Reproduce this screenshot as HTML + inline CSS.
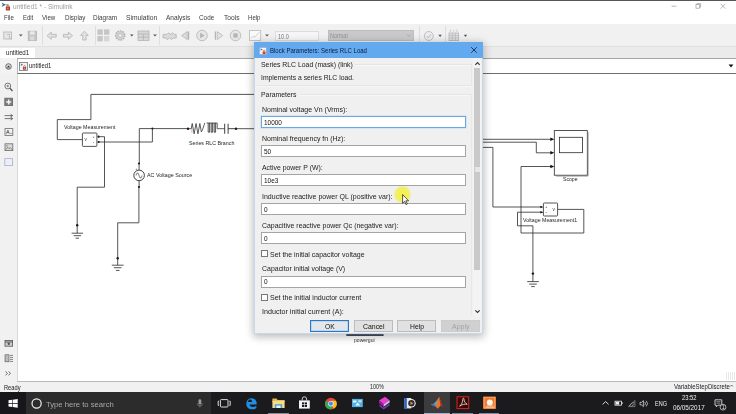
<!DOCTYPE html>
<html>
<head>
<meta charset="utf-8">
<title>untitled1 * - Simulink</title>
<style>
html,body{margin:0;padding:0;}
body{width:736px;height:414px;overflow:hidden;background:#fff;font-family:"Liberation Sans",sans-serif;position:relative;}
.a{position:absolute;}
.t{position:absolute;white-space:nowrap;line-height:1;color:#222;filter:blur(0.3px);}
/* window chrome */
#top{left:0;top:0;width:736px;height:1px;background:#555;}
#titlebar{left:0;top:1px;width:736px;height:11px;background:#fff;}
#menubar{left:0;top:12px;width:736px;height:12px;background:#fff;}
#toolbar{left:0;top:24px;width:736px;height:22px;background:#f1f1f1;}
#tabbar{left:0;top:46px;width:736px;height:12px;background:#ebebeb;border-top:1px solid #e0e0e0;box-sizing:border-box;}
#tab{left:0;top:48px;width:35px;height:10px;background:#fff;}
#crumbbar{left:0;top:58px;width:736px;height:16px;background:#f3f3f3;}
#crumb{left:17px;top:58px;width:720px;height:16px;background:#fff;border-top:1px solid #a6a6a6;border-left:1px solid #b5b5b5;border-bottom:1px solid #6e6e6e;box-sizing:border-box;}
#palette{left:0;top:74px;width:18px;height:307px;background:#f1f1f1;border-right:1px solid #d9d9d9;box-sizing:border-box;}
#canvas{left:17px;top:74px;width:719px;height:307px;background:#fff;}
#statusbar{left:0;top:381px;width:736px;height:12px;background:#f1f1f1;box-sizing:border-box;background-image:linear-gradient(#b9b9b9,#b9b9b9);background-size:719px 1px;background-position:17px 0;background-repeat:no-repeat;}
#taskbar{left:0;top:392px;width:736px;height:22px;background:#1b1b1d;}
/* dialog */
#dlgshadow{left:254px;top:42px;width:228.500px;height:292.200px;box-shadow:0 2px 8px 1px rgba(0,0,0,.27);}
#dlg{left:254px;top:42px;width:228.500px;height:292.200px;background:#f0f0f0;border:1.600px solid #c2d9f0;box-sizing:border-box;}
#dlgtitle{left:254px;top:42px;width:228.500px;height:16px;background:#62a9f0;}
.inp{position:absolute;left:261px;width:205px;height:12px;background:#fff;border:1px solid #a4a4a4;box-sizing:border-box;}
.btn{position:absolute;top:320.200px;height:11.800px;background:#e1e1e1;border:1px solid #bcbcbc;box-sizing:border-box;}
.cb{position:absolute;left:260.600px;width:7px;height:7px;background:#fdfdfd;border:0.900px solid #787878;box-sizing:border-box;}
.d{font-size:7.4px;color:#1a1a1a;}
</style>
</head>
<body>
<div class="a" id="titlebar"></div>
<div class="a" id="menubar"></div>
<div class="a" id="toolbar"></div>
<div class="a" id="tabbar"></div>
<div class="a" id="tab"></div>
<div class="a" id="crumbbar"></div>
<div class="a" id="crumb"></div>
<div class="a" id="canvas"></div>
<div class="a" id="palette"></div>
<div class="a" id="statusbar"></div>
<div class="a" id="taskbar"></div>
<div class="a" id="top"></div>

<!-- DIAGRAM -->
<svg class="a" id="diagram" style="left:0;top:0" width="736" height="414" viewBox="0 0 736 414">
<g fill="none" stroke="#2a2a2a" stroke-width="0.8" stroke-linejoin="miter">
<!-- left: top loop into VM block -->
<path d="M254 94.4H90.9V119.6H57.3V139.6H82.5"/>
<!-- VM block -->
<rect x="82.4" y="133" width="14.5" height="13.4" rx="0.8" fill="#fff"/>
<!-- upper port to ground1 -->
<path d="M98.5 136.7H104.5V187.2H77.2V225"/>
<!-- lower port to node -->
<path d="M98.5 142H152.4V128.6"/>
<!-- main horizontal -->
<path d="M139.3 128.6H188"/>
<path d="M236 128.7H254"/>
<!-- down to AC source -->
<path d="M139.3 128.6V163.5"/>
<path d="M139.100 163.500V170"/>
<circle cx="139.100" cy="175.400" r="5.300" fill="#fff" stroke-width="0.900"/>
<path d="M136 175.5c1-3.4 2-3.4 3 0s2 3.4 3 0" stroke-width="0.7"/>
<path d="M139.100 180.700V186.700"/>
<path d="M138.9 186.7V222.8H117.7V258"/>
<!-- ground1 -->
<path d="M77.2 225V233.2M71.6 233.2H83M73.6 235.7H81M75.6 238.2H79" />
<!-- ground2 -->
<path d="M117.7 258V265.2M111.8 265.2H123.6M113.9 267.7H121.5M115.9 270.4H119.5"/>
<!-- RLC branch -->
<path d="M188 128.700H191.300l0.950 -5.200 1.900 10.300 1.900-10.300 1.900 10.300 1.900-10.300 1.500 8.400 1.300-2.600 2.200-6.400" stroke-width="0.750"/>
<path d="M206.600 123H217.200V128.700H224.700" stroke-width="0.750"/>
<path d="M208.200 123V132.200H209.600V123M211.200 123V132.200H212.600V123M214.200 123V132.200H215.600V123" stroke-width="0.800"/>
<path d="M224.700 123.700V133.800M228.100 123.700V133.800M228.100 128.700H236" stroke-width="0.900"/>
<path d="M191.900 124.500v8.500" stroke="#c0392b" stroke-width="0.700" opacity="0.550"/>
</g>
<g fill="#1a1a1a" stroke="none">
<circle cx="98.6" cy="136.7" r="1.1"/><circle cx="98.6" cy="142" r="1.1"/>
<circle cx="152.4" cy="128.6" r="1"/>
<circle cx="139" cy="163.5" r="1.1"/><circle cx="139" cy="187" r="1.1"/>
<circle cx="77.2" cy="225.2" r="1.2"/><circle cx="117.7" cy="258.2" r="1.2"/>
<circle cx="188" cy="128.7" r="1.2"/><circle cx="236" cy="128.7" r="1.2"/>
</g>
<!-- right side -->
<g fill="none" stroke="#2a2a2a" stroke-width="0.8">
<path d="M482 139.3H552"/>
<path d="M482 142.2H536.3V152.8H552"/>
<path d="M482 147.400H492.900V207H541.500"/>
<path d="M552 166.500H521V233H583.800V209.400H557.600"/>
<path d="M541.500 212.200H517.500V225.800H532.900V273.400"/>
<path d="M532.9 273.4V281.6M527.2 281.6H538.8M529.2 284.1H536.8M531.2 286.6H534.8"/>
<rect x="554.3" y="130.6" width="33" height="44.6" fill="#fff"/>
<rect x="559.5" y="137.3" width="23" height="15.4" fill="#fff"/>
<rect x="543.400" y="203" width="14.200" height="13" rx="0.800" fill="#fff"/>
</g>
<g fill="#111" stroke="none">
<path d="M554.3 139.3l-4-1.7v3.4z"/><path d="M554.3 152.8l-4-1.7v3.4z"/><path d="M554.3 166.5l-4-1.7v3.4z"/>
<path d="M543.400 207l-3-1.300v2.600z"/><path d="M543.400 212.200l-3-1.300v2.600z"/>
<circle cx="532.9" cy="273.6" r="1.2"/>
</g>
<!-- scope shadow -->
<path d="M588 132V176H556" fill="none" stroke="#777" stroke-width="0.8"/>
<!-- powergui -->
<rect x="346.300" y="334.300" width="37.300" height="1.500" fill="#1c2238"/>
</svg>

<svg class="a" style="left:1px;top:2px" width="10" height="10" viewBox="0 0 10 10">
<path d="M0.6 0.5L4.9 2.7L0.6 4.9L1.8 2.7Z" fill="#2a6f8f"/>
<path d="M4.6 2.7H6.6V4" fill="none" stroke="#2a6f8f" stroke-width="0.5"/>
<rect x="4.8" y="4.6" width="4.2" height="4" rx="0.5" fill="#b8402f"/>
<path d="M5.9 4.8V3.6a1 1 0 0 1 2 0V4.8" fill="none" stroke="#b8402f" stroke-width="0.7"/>
<rect x="6.5" y="5.8" width="0.8" height="1.4" fill="#f1c9c2"/>
</svg>
<div class="t" style="left:12.80px;top:3px;font-size:7.0px;color:#9c9c9c;transform:scaleX(0.934);transform-origin:0 0;">untitled1 * - Simulink</div>
<svg class="a" style="left:664px;top:1px" width="70" height="11" viewBox="0 0 70 11"><g stroke="#9a9a9a" stroke-width="0.7" fill="none"><path d="M7.5 5.2H12.5"/><rect x="32" y="3.6" width="3.6" height="3.6"/><path d="M33 3.6V2.6H36.6V6.2H35.6"/><path d="M56.6 2.8L61.4 7.6M61.4 2.8L56.6 7.6"/></g></svg>
<div class="t" style="left:3.90px;top:14px;font-size:7.0px;color:#3c3c3c;transform:scaleX(0.878);transform-origin:0 0;">File</div>
<div class="t" style="left:23.00px;top:14px;font-size:7.0px;color:#3c3c3c;transform:scaleX(0.846);transform-origin:0 0;">Edit</div>
<div class="t" style="left:42.40px;top:14px;font-size:7.0px;color:#3c3c3c;transform:scaleX(0.884);transform-origin:0 0;">View</div>
<div class="t" style="left:64.50px;top:14px;font-size:7.0px;color:#3c3c3c;transform:scaleX(0.884);transform-origin:0 0;">Display</div>
<div class="t" style="left:93.30px;top:14px;font-size:7.0px;color:#3c3c3c;transform:scaleX(0.915);transform-origin:0 0;">Diagram</div>
<div class="t" style="left:126.00px;top:14px;font-size:7.0px;color:#3c3c3c;transform:scaleX(0.958);transform-origin:0 0;">Simulation</div>
<div class="t" style="left:166.00px;top:14px;font-size:7.0px;color:#3c3c3c;transform:scaleX(0.932);transform-origin:0 0;">Analysis</div>
<div class="t" style="left:199.30px;top:14px;font-size:7.0px;color:#3c3c3c;transform:scaleX(0.908);transform-origin:0 0;">Code</div>
<div class="t" style="left:223.50px;top:14px;font-size:7.0px;color:#3c3c3c;transform:scaleX(0.949);transform-origin:0 0;">Tools</div>
<div class="t" style="left:248.00px;top:14px;font-size:7.0px;color:#3c3c3c;transform:scaleX(0.868);transform-origin:0 0;">Help</div>
<div class="a" style="left:41.9px;top:26px;width:1px;height:19px;background:#dedede"></div>
<div class="a" style="left:94.5px;top:26px;width:1px;height:19px;background:#dedede"></div>
<div class="a" style="left:159.3px;top:26px;width:1px;height:19px;background:#dedede"></div>
<div class="a" style="left:418.8px;top:26px;width:1px;height:19px;background:#dedede"></div>
<div class="a" style="left:445px;top:26px;width:1px;height:19px;background:#dedede"></div>
<svg class="a" style="left:0;top:24px" width="480" height="22" viewBox="0 24 480 22">
<g fill="none" stroke="#b4b4b4" stroke-width="0.8">
<!-- new model -->
<rect x="3.8" y="32" width="7.6" height="7" fill="#e6e6e6"/><path d="M7 34.5h3M9.5 35.5v2.6l2.2 1.2" />
<!-- save -->
<rect x="28.2" y="31.2" width="8.4" height="9.2" fill="#c6c6c6" stroke="#b4b4b4"/><rect x="30" y="31.4" width="4.6" height="3.2" fill="#e9e9e9" stroke="none"/><rect x="30.4" y="36.6" width="3.8" height="3.6" fill="#dcdcdc" stroke="none"/>
<!-- back/fwd/up arrows -->
<path d="M47 35.7l4.2-3.6v2.2h5v2.8h-5v2.2z" fill="#e2e2e2"/>
<path d="M72.6 35.7l-4.2-3.6v2.2h-5v2.8h5v2.2z" fill="#e2e2e2"/>
<path d="M84.4 31.2l3.9 4.2h-2.2v4.6h-3.4v-4.6h-2.2z" fill="#e2e2e2"/>
<!-- library -->
<g stroke="none" fill="#c6c6c6"><rect x="97.4" y="29.4" width="5.4" height="5.4"/><rect x="104" y="29.4" width="5.4" height="5.4"/><rect x="97.4" y="36" width="5.4" height="5.4"/><rect x="104" y="36" width="5.4" height="5.4" fill="#d6d6d6"/></g>
<!-- gear -->
<circle cx="120.2" cy="35.5" r="4.6" fill="#d0d0d0" stroke="#b4b4b4" stroke-width="1.4" stroke-dasharray="1.6 1"/><circle cx="120.2" cy="35.5" r="1.8" fill="#efefef" stroke="#b4b4b4" stroke-width="0.6"/>
<!-- explorer -->
<rect x="138" y="31" width="11" height="9.4" fill="#d8d8d8"/><path d="M138 34H149M138 37.2H149M143.4 34V40.4" />
<!-- build -->
<path d="M163 34.4h4l1.6-1.6 2 1.6 2-1.6 1.6 1.6h2v3.6h-3l-1.6 1.6-2-1.6-2.6 1.6-1-1.6h-3z" fill="#dadada"/>
<!-- step back -->
<path d="M181.6 35.6l5.6-4v8z" fill="#dcdcdc"/><path d="M188.6 31.4v8.4" stroke-width="1.2"/>
<!-- play -->
<circle cx="202" cy="35.5" r="5.3" fill="#e6e6e6"/><path d="M200.2 32.8l4.4 2.7-4.4 2.7z" fill="#b4b4b4" stroke="none"/>
<!-- step fwd -->
<path d="M215.4 31.4v8.4" stroke-width="1.2"/><path d="M222.6 35.6l-5.4-4v8z" fill="#e4e4e4"/>
<!-- stop -->
<circle cx="235.5" cy="35.5" r="5.3" fill="#e6e6e6"/><rect x="233.4" y="33.4" width="4.2" height="4.2" fill="#b4b4b4" stroke="none"/>
<!-- scope -->
<rect x="249.5" y="30.6" width="11.2" height="9.8" fill="#fafafa" stroke="#b9b9b9"/><path d="M250.6 38.6l2.6-2.4 1.6 1 4.6-5" stroke="#b0b0b0" stroke-width="0.6"/>
<!-- check circle -->
<circle cx="428.8" cy="36" r="4.5" fill="#ededed"/><path d="M426.8 36l1.6 1.7 2.6-3.4" stroke-width="0.9"/>
<!-- grid -->
<rect x="449" y="33" width="9.6" height="7.6" fill="#e2e2e2"/><path d="M449 35.6h9.6M449 38h9.6M452.2 33v7.6M455.4 33v7.6M450.6 29.6v2.4M453.8 29.6v2.4M457 29.6v2.4" stroke-width="0.6"/>
</g>
<!-- dropdown arrows -->
<g fill="#555">
<path d="M19 34.4h3.6l-1.8 2.2z"/><path d="M130 34.4h3.6l-1.8 2.2z"/><path d="M153.2 34.4h3.6l-1.8 2.2z"/><path d="M265.2 34.4h3.6l-1.8 2.2z"/>
<path d="M438.4 34.8h3.4l-1.7 2.1z"/><path d="M463.8 34.8h3.4l-1.7 2.1z"/>
</g>
</svg>
<div class="a" style="left:275px;top:30.6px;width:44px;height:10px;background:#f6f6f6;border:1px solid #dcdcdc;box-sizing:border-box"></div>
<div class="t" style="left:278.00px;top:34px;font-size:6.6px;color:#7a7a7a;transform:scaleX(0.841);transform-origin:0 0;">10.0</div>
<div class="a" style="left:328px;top:30px;width:86px;height:10.6px;background:#c9c9c9;border:1px solid #bdbdbd;box-sizing:border-box"></div>
<div class="t" style="left:330.00px;top:33px;font-size:6.6px;color:#939393;transform:scaleX(0.828);transform-origin:0 0;">Normal</div>
<svg class="a" style="left:406px;top:33px" width="6" height="5" viewBox="0 0 6 5"><path d="M1 1.4L3 3.4L5 1.4" stroke="#a6a6a6" stroke-width="0.8" fill="none"/></svg>
<div class="t" style="left:6.00px;top:50px;font-size:6.9px;color:#222;transform:scaleX(0.889);transform-origin:0 0;">untitled1</div>
<svg class="a" style="left:4.2px;top:61.6px" width="9" height="9" viewBox="0 0 9 9"><circle cx="4.5" cy="4.5" r="2.8" fill="#dcdcdc" stroke="#4e4e4e" stroke-width="0.8"/><path d="M3 5.2L4.5 3.5L6 5.2Z" fill="#333"/><path d="M3 5.9H6" stroke="#333" stroke-width="0.5"/></svg>
<svg class="a" style="left:19px;top:61.7px" width="9" height="9" viewBox="0 0 9 9">
<rect x="0.4" y="0.4" width="8" height="8" fill="#f3f5f8" stroke="#70757c" stroke-width="0.8"/>
<path d="M1.4 1.5l2.8 1.3-2.8 1.3 .7-1.3z" fill="#2d7fa8"/>
<rect x="3.9" y="5" width="3.2" height="2.8" rx="0.4" fill="#b5482f"/>
<path d="M4.7 5.1V4.2a0.8 0.8 0 0 1 1.6 0V5.1" fill="none" stroke="#b5482f" stroke-width="0.6"/>
<rect x="5.2" y="5.9" width="0.6" height="1" fill="#f1d5cd"/>
</svg>
<svg class="a" style="left:727.800px;top:63.800px" width="6" height="4" viewBox="0 0 6 4"><path d="M0.6 0.5H5.4L3 3.4z" fill="#111"/></svg>
<div class="t" style="left:28.80px;top:63px;font-size:6.9px;color:#222;transform:scaleX(0.851);transform-origin:0 0;">untitled1</div>
<svg class="a" style="left:0;top:74px" width="17" height="307" viewBox="0 74 17 307">
<g fill="none" stroke="#6c6c6c" stroke-width="0.8">
<circle cx="7.8" cy="86" r="2.9" fill="#fafafa" stroke="#555"/><path d="M9.9 88.2l2.6 2.8" stroke="#555" stroke-width="1.3"/><path d="M6.4 86h2.8M7.8 84.600v2.8" stroke="#444" stroke-width="0.6"/>
<rect x="4.800" y="98.2" width="7.800" height="7.400" fill="#7d7d7d" stroke="#666"/><path d="M8.700 99.400v5M6.200 101.900h5" stroke="#f4f4f4" stroke-width="1.500"/>
<path d="M4.6 115.6h8M10.6 114.2l2 1.4-2 1.4M4.6 118.6h8M10.6 117.2l2 1.4-2 1.4" stroke="#444" stroke-width="0.7"/>
<rect x="5" y="128.6" width="7.8" height="6.8" fill="#f0f0f0"/><path d="M6.4 133.8l1.5-3.6 1.5 3.6M6.9 132.6h2" stroke="#333" stroke-width="0.6"/><path d="M10.2 133.6h2" stroke-width="0.6"/>
<rect x="5" y="143.8" width="7.8" height="6.8" fill="#d9d9d9"/><path d="M5.6 149.8l2.2-2.6 1.6 1.6 1.2-1 1.8 2" stroke="#555" stroke-width="0.6"/><circle cx="7" cy="145.8" r="0.6" fill="#555" stroke="none"/>
<rect x="4.800" y="158.600" width="7.600" height="7" fill="#eeeef8" stroke="#a9adcc"/>
<rect x="5" y="340.4" width="7.6" height="5.8" fill="#cfcfcf" stroke="#555"/><path d="M5 342h7.6" stroke="#444"/><circle cx="8.8" cy="343.8" r="1.2" fill="#555" stroke="none"/>
<rect x="5" y="354.8" width="4" height="7" fill="#bbb" stroke="#555" stroke-width="0.6"/><path d="M10 355.4h3M10 357.4h3M10 359.4h3M10 361.4h3" stroke="#555" stroke-width="0.7"/>
<path d="M5.6 371.4l1.8 2-1.8 2M8.6 371.4l1.8 2-1.8 2" stroke="#333" stroke-width="0.7"/>
</g></svg>
<div class="t" style="left:3.50px;top:385px;font-size:6.6px;color:#222;transform:scaleX(0.865);transform-origin:0 0;">Ready</div>
<div class="t" style="left:369.80px;top:384px;font-size:6.4px;color:#222;transform:scaleX(0.843);transform-origin:0 0;">100%</div>
<div class="t" style="left:673.70px;top:384px;font-size:6.4px;color:#222;transform:scaleX(0.939);transform-origin:0 0;">VariableStepDiscrete</div>
<svg class="a" style="left:728px;top:383px" width="8" height="8" viewBox="0 0 8 8"><path d="M2.2 3.6l1.4-1.6 1.4 1.6" stroke="#333" stroke-width="0.6" fill="none"/></svg>
<div class="a" style="left:726px;top:372px;width:9px;height:8px;background:repeating-linear-gradient(90deg,#e9e9e9 0 1px,#fff 1px 2px)"></div>
<div class="a" style="left:0;top:392.4px;width:26.2px;height:21.6px;background:#17171b"></div>
<div class="a" style="left:26.2px;top:392.4px;width:184.8px;height:21.6px;background:#2c2c2d"></div>
<div class="a" style="left:424.3px;top:392.4px;width:25.5px;height:21.6px;background:#3c3c3e"></div>
<div class="a" style="left:268.3px;top:412.6px;width:20.7px;height:1.4px;background:#7f8ba3"></div>
<div class="a" style="left:424.3px;top:412.6px;width:25.5px;height:1.4px;background:#9fb3d1"></div>
<div class="a" style="left:452px;top:412.6px;width:20.6px;height:1.4px;background:#7f8ba3"></div>
<div class="a" style="left:478.8px;top:412.6px;width:20.7px;height:1.4px;background:#7f8ba3"></div>
<svg class="a" style="left:0;top:392px" width="736" height="22" viewBox="0 392 736 22">
<!-- windows logo -->
<g fill="#fff"><path d="M8.5 400.3l3.6-.5v3.3H8.5zM12.7 399.7l5-.7v4.1h-5zM8.5 403.7h3.6v3.3l-3.6-.5zM12.7 403.7h5v4.1l-5-.7z"/></g>
<!-- cortana -->
<circle cx="36.6" cy="403.5" r="4.6" fill="none" stroke="#f2f2f2" stroke-width="1.2"/>
<!-- mic -->
<rect x="198.5" y="399.2" width="2.8" height="5.4" rx="1.4" fill="#9a9a9a"/><path d="M197.4 403.4a2.5 2.5 0 0 0 5 0M199.9 406v1.4" stroke="#9a9a9a" stroke-width="0.6" fill="none"/>
<!-- task view -->
<g fill="none" stroke="#f0f0f0" stroke-width="0.9"><rect x="220.4" y="399.6" width="7.6" height="7.4" rx="0.8"/><path d="M219 401.2h-.8v4.2h.8M229.4 401.2h.8v4.2h-.8"/></g>
<!-- edge -->
<path d="M246.2 403.2c.3-3.2 2.6-5 5.3-5c3.2 0 5.2 2.4 5.2 5.4v1h-7.2c.2 1.6 1.5 2.4 3.2 2.4c1.300 0 2.500-.3 3.600-1v2.300c-1.200.7-2.700 1-4.300 1c-3.400 0-5.700-2.200-5.700-5.300c0-2 1-3.700 2.800-4.600c-.7.800-1.100 1.700-1.200 2.700h4.200c0-1.500-.8-2.500-2.300-2.500c-1.600 0-3 1.300-3.600 3.600z" fill="#1e8fe6"/>
<!-- explorer -->
<path d="M272.4 398.600h4.200l1 1.400h7v2h-12.200z" fill="#e8b64a"/><rect x="272.400" y="400.800" width="12.200" height="7.200" fill="#f7dd86"/><rect x="274.800" y="404.200" width="7.400" height="3.800" fill="#4aa3df"/><rect x="276.400" y="405.600" width="4.200" height="2.400" fill="#e9f3fb"/>
<!-- store -->
<path d="M299 400.400h10.800v8.200h-10.800z" fill="#f4f4f4"/><path d="M302.200 400.400v-1.400a2.200 2.200 0 0 1 4.400 0v1.400" fill="none" stroke="#f4f4f4" stroke-width="0.8"/><g fill="#1b1b1d"><rect x="302" y="402.400" width="2.200" height="2"/><rect x="304.800" y="402.400" width="2.200" height="2"/><rect x="302" y="405" width="2.200" height="2"/><rect x="304.800" y="405" width="2.200" height="2"/></g>
<!-- chrome -->
<circle cx="330.900" cy="403.700" r="5.900" fill="#e8453c"/><path d="M330.900 403.700L325.800 400.750A5.900 5.900 0 0 0 330.900 409.600L333.800 404.600z" fill="#34a853"/><path d="M330.900 403.700L333.850 408.800A5.900 5.900 0 0 0 336.000 400.750L330.900 400.750z" fill="#fbc116"/><circle cx="330.900" cy="403.700" r="2.700" fill="#f4f4f4"/><circle cx="330.900" cy="403.700" r="2.100" fill="#4a8af4"/>
<!-- photo app -->
<rect x="352" y="398.900" width="10.800" height="8.200" fill="#4fb2e6"/><path d="M353 400.400h3.400v2h-3.400zM357.600 402.600l2.600 2.800h-5z" fill="#e9f6fd"/><rect x="358.400" y="400.200" width="3.200" height="2.200" fill="#bfe4f7"/>
<!-- books -->
<path d="M379 400.600l6-3.800 4.600 3.400-6 4z" fill="#e93ad2"/><path d="M379 400.600v2.600l4.600 3.600v-2.600z" fill="#9a1a9a"/><path d="M383.600 404.200l6-4v2.400l-6 4.200z" fill="#c9c9d6"/><path d="M379.400 404.400l4.200 3.200 6-4.200v2l-6 4.000-4.200-3.200z" fill="#7a2fb8"/>
<!-- media player -->
<rect x="404.200" y="398" width="7" height="10.400" fill="#dfe6ee"/><rect x="404.200" y="398" width="2.600" height="10.400" fill="#2f62b8"/><circle cx="411.400" cy="403.200" r="4.300" fill="#f1f1f1"/><circle cx="411.400" cy="403.200" r="3.200" fill="#2a2a3a"/><path d="M410.400 401.400l3 1.800-3 1.800z" fill="#f08a2a"/>
<!-- matlab -->
<path d="M430.800 404.600l3.400-1.200 2.400-2.600 2.600-4 3.200 9.600-2-.8-2.400 3.200-3.400-3z" fill="#e8742a"/><path d="M430.800 404.600l3.400-1.200 1.600 1.600-1.400 1.400z" fill="#3c7fb8"/><path d="M439.200 396.800l3.200 9.600-2-.8z" fill="#b62a1e"/><path d="M434.200 403.400l2.400-2.600 1.400 1.800-2.200 2.400z" fill="#5aa6c8"/>
<!-- adobe -->
<rect x="457" y="396.800" width="11.700" height="11.800" fill="#3a0907" stroke="#cf2a1e" stroke-width="1"/><path d="M459.600 406.200c2-1.600 3.200-4.200 3.200-7c0-1.200 1.200-1.200 1.200 0c0 2.400 1.600 4.200 3.200 5.000c-2.400-.4-5.200.4-7.600 2z" fill="none" stroke="#f3e9e6" stroke-width="0.8"/>
<!-- orange app -->
<rect x="483" y="396.400" width="13" height="12.700" rx="0.800" fill="#ee7a2e"/><rect x="484.200" y="397.600" width="10.600" height="10.300" fill="none" stroke="#f6b284" stroke-width="0.6"/><circle cx="489.800" cy="402.400" r="3" fill="#fdf3ea"/><path d="M485 408l2.200-3h5.200l2.200 3z" fill="#f9cfae" opacity="0.600"/>
<!-- tray -->
<g fill="none" stroke="#ededed" stroke-width="0.9">
<path d="M602.600 404.400l3-2.800 3 2.800"/>
<rect x="615" y="401.200" width="6.400" height="4" stroke-width="0.800"/><path d="M622.200 402.400v1.600" stroke-width="0.900"/>
<path d="M628.400 406.600l6.600-6.200v6.200z" stroke="#8c8c8c" stroke-width="0.700"/><path d="M629.600 406.400a4.500 4.500 0 0 1 4.900-3.600M631.600 406.500a2.600 2.600 0 0 1 2.800-1.800" stroke="#bdbdbd" stroke-width="0.700"/>
<path d="M640 402.400h1.400l2-1.800v6l-2-1.800h-1.400z" stroke-width="0.700"/><path d="M644.800 402a2.400 2.400 0 0 1 0 3.200M646.200 400.800a4 4 0 0 1 0 5.600" stroke-width="0.700"/>
<path d="M715 399.800h6.800v5.400h-3.800l-1.600 1.600v-1.600h-1.400z" stroke-width="0.800" fill="#1b1b1d"/><path d="M716.400 401.600h4M716.400 403.200h4" stroke-width="0.500"/>
</g>
<rect x="615.600" y="401.800" width="3.600" height="2.800" fill="#ededed"/>
<circle cx="723" cy="407.200" r="2.900" fill="#1b1b1d" stroke="#ededed" stroke-width="0.700"/>
</svg>
<div class="t" style="left:46.30px;top:401px;font-size:8px;color:#a9a9a9;transform:scaleX(0.958);transform-origin:0 0;">Type here to search</div>
<div class="t" style="left:654.50px;top:401px;font-size:6.8px;color:#efefef;transform:scaleX(0.808);transform-origin:0 0;">ENG</div>
<div class="t" style="left:681.70px;top:395px;font-size:6.6px;color:#efefef;transform:scaleX(0.878);transform-origin:0 0;">23:52</div>
<div class="t" style="left:673.30px;top:405px;font-size:6.6px;color:#efefef;transform:scaleX(0.960);transform-origin:0 0;">06/05/2017</div>
<div class="t" style="left:721.90px;top:406px;font-size:4.6px;color:#efefef;">1</div>
<div class="t" style="left:63.50px;top:125px;font-size:5.6px;color:#262626;transform:scaleX(0.945);transform-origin:0 0;">Voltage Measurement</div>
<div class="t" style="left:189.00px;top:141px;font-size:5.6px;color:#262626;transform:scaleX(0.947);transform-origin:0 0;">Series RLC Branch</div>
<div class="t" style="left:147.30px;top:173px;font-size:5.6px;color:#262626;transform:scaleX(0.957);transform-origin:0 0;">AC Voltage Source</div>
<div class="t" style="left:563.30px;top:177px;font-size:5.4px;color:#262626;transform:scaleX(0.954);transform-origin:0 0;">Scope</div>
<div class="t" style="left:522.80px;top:218px;font-size:5.6px;color:#262626;transform:scaleX(0.941);transform-origin:0 0;">Voltage Measurement1</div>
<div class="t" style="left:354.10px;top:338px;font-size:5.4px;color:#333;transform:scaleX(0.945);transform-origin:0 0;">powergui</div>
<div class="t" style="left:84.40px;top:138px;font-size:4.5px;color:#333;">v</div>
<div class="t" style="left:92.60px;top:135px;font-size:4px;color:#333;">+</div>
<div class="t" style="left:92.80px;top:141px;font-size:4.5px;color:#333;">-</div>
<div class="t" style="left:545.00px;top:205px;font-size:4px;color:#333;">+</div>
<div class="t" style="left:545.40px;top:211px;font-size:4.5px;color:#333;">-</div>
<div class="t" style="left:552.60px;top:208px;font-size:4.5px;color:#333;">v</div>
<div class="t" style="left:135.20px;top:168px;font-size:3.6px;color:#333;">+</div>
<div class="a" id="dlgshadow"></div>
<div class="a" id="dlg"></div>
<div class="a" id="dlgtitle"></div>
<svg class="a" style="left:259.2px;top:46.6px" width="8" height="8" viewBox="0 0 8 8">
<rect x="0.3" y="0.3" width="7.2" height="7.2" fill="#f4f6f9" stroke="#8d97a6" stroke-width="0.6"/>
<path d="M1.2 1.3l2.6 1.2-2.6 1.2 .6-1.2z" fill="#2d7fa8"/>
<rect x="3.6" y="4.4" width="3" height="2.6" rx="0.4" fill="#c2452f"/>
<path d="M4.3 4.5V3.7a0.8 0.8 0 0 1 1.6 0V4.5" fill="none" stroke="#c2452f" stroke-width="0.6"/>
</svg>
<div class="t" style="left:270.00px;top:48px;font-size:7.1px;color:#0d1b3a;transform:scaleX(0.851);transform-origin:0 0;">Block Parameters: Series RLC Load</div>
<svg class="a" style="left:470px;top:46px" width="8" height="8" viewBox="0 0 8 8"><path d="M1.2 1.2L6.8 6.8M6.8 1.2L1.2 6.8" stroke="#1d2b4d" stroke-width="0.9" fill="none"/></svg>
<div class="a" style="left:355px;top:63.6px;width:116.5px;height:1px;background:#e5e5e5;box-shadow:0 1px 0 #f7f7f7"></div>
<div class="a" style="left:257px;top:85px;width:214.5px;height:1px;background:#e5e5e5;box-shadow:0 1px 0 #f7f7f7"></div>
<div class="a" style="left:298.5px;top:93.8px;width:173px;height:1px;background:#e5e5e5;box-shadow:0 1px 0 #f7f7f7"></div>
<div class="a" style="left:471px;top:64px;width:1px;height:21px;background:#e6e6e6"></div>
<div class="a" style="left:471px;top:94px;width:1px;height:222px;background:#e8e8e8"></div>
<div class="a" style="left:473px;top:58px;width:8px;height:258px;background:#f3f3f3"></div>
<div class="a" style="left:473.900px;top:68.300px;width:6.500px;height:201.500px;background:#c9c9c9"></div>
<svg class="a" style="left:474px;top:61px" width="7" height="5" viewBox="0 0 7 5"><path d="M1.300 3.800L3.500 1.600L5.700 3.800" stroke="#333" stroke-width="1.100" fill="none"/></svg>
<svg class="a" style="left:474px;top:308.5px" width="7" height="5" viewBox="0 0 7 5"><path d="M1.300 1.300L3.500 3.500L5.700 1.300" stroke="#333" stroke-width="1.100" fill="none"/></svg>
<div class="a" style="left:475.400px;top:167px;width:4.400px;height:4.600px;background:#e6e6e6"></div>
<div class="t" style="left:261.00px;top:61px;font-size:7.5px;color:#1c1c1c;transform:scaleX(0.914);transform-origin:0 0;">Series RLC Load (mask) (link)</div>
<div class="t" style="left:261.00px;top:74px;font-size:7.5px;color:#1c1c1c;transform:scaleX(0.906);transform-origin:0 0;">Implements a series RLC load.</div>
<div class="t" style="left:261.00px;top:91px;font-size:7.5px;color:#1c1c1c;transform:scaleX(0.913);transform-origin:0 0;">Parameters</div>
<div class="t" style="left:262.00px;top:106px;font-size:7.5px;color:#1c1c1c;transform:scaleX(0.932);transform-origin:0 0;">Nominal voltage Vn (Vrms):</div>
<div class="inp" style="top:116.4px;border-color:#6ba8e2;box-shadow:0 0 0 0.400px #b5d3ef"></div>
<div class="t" style="left:264.20px;top:120px;font-size:7.1px;color:#111;transform:scaleX(0.910);transform-origin:0 0;">10000</div>
<div class="t" style="left:262.00px;top:135px;font-size:7.5px;color:#1c1c1c;transform:scaleX(0.934);transform-origin:0 0;">Nominal frequency fn (Hz):</div>
<div class="inp" style="top:145.4px"></div>
<div class="t" style="left:264.20px;top:149px;font-size:7.1px;color:#111;transform:scaleX(0.910);transform-origin:0 0;">50</div>
<div class="t" style="left:262.00px;top:164px;font-size:7.5px;color:#1c1c1c;transform:scaleX(0.918);transform-origin:0 0;">Active power P (W):</div>
<div class="inp" style="top:174.4px"></div>
<div class="t" style="left:264.20px;top:178px;font-size:7.1px;color:#111;transform:scaleX(0.910);transform-origin:0 0;">10e3</div>
<div class="t" style="left:262.00px;top:193px;font-size:7.5px;color:#1c1c1c;transform:scaleX(0.934);transform-origin:0 0;">Inductive reactive power QL (positive var):</div>
<div class="inp" style="top:203.4px"></div>
<div class="t" style="left:264.20px;top:207px;font-size:7.1px;color:#111;transform:scaleX(0.910);transform-origin:0 0;">0</div>
<div class="t" style="left:262.00px;top:222px;font-size:7.5px;color:#1c1c1c;transform:scaleX(0.925);transform-origin:0 0;">Capacitive reactive power Qc (negative var):</div>
<div class="inp" style="top:232.4px"></div>
<div class="t" style="left:264.20px;top:236px;font-size:7.1px;color:#111;transform:scaleX(0.910);transform-origin:0 0;">0</div>
<div class="cb" style="top:250.400px"></div>
<div class="t" style="left:270.30px;top:251px;font-size:7.5px;color:#1c1c1c;transform:scaleX(0.929);transform-origin:0 0;">Set the initial capacitor voltage</div>
<div class="t" style="left:261.80px;top:265px;font-size:7.5px;color:#1c1c1c;transform:scaleX(0.928);transform-origin:0 0;">Capacitor initial voltage (V)</div>
<div class="inp" style="top:275.5px"></div>
<div class="t" style="left:264.20px;top:279px;font-size:7.1px;color:#111;transform:scaleX(0.910);transform-origin:0 0;">0</div>
<div class="cb" style="top:293.600px"></div>
<div class="t" style="left:270.30px;top:294px;font-size:7.5px;color:#1c1c1c;transform:scaleX(0.940);transform-origin:0 0;">Set the initial inductor current</div>
<div class="t" style="left:261.80px;top:308px;font-size:7.5px;color:#1c1c1c;transform:scaleX(0.953);transform-origin:0 0;">Inductor initial current (A):</div>
<div class="btn" style="left:310.3px;width:39px;border:1.300px solid #2b78c8;background:#e3e6ea;box-shadow:inset 0 0 0 0.500px #9cc3ea;"></div>
<div class="t" style="left:325.00px;top:323px;font-size:7.3px;color:#111;transform:scaleX(0.910);transform-origin:0 0;">OK</div>
<div class="btn" style="left:354.3px;width:38.3px;"></div>
<div class="t" style="left:362.70px;top:323px;font-size:7.3px;color:#111;transform:scaleX(0.946);transform-origin:0 0;">Cancel</div>
<div class="btn" style="left:397.4px;width:39px;"></div>
<div class="t" style="left:409.90px;top:323px;font-size:7.3px;color:#111;transform:scaleX(0.933);transform-origin:0 0;">Help</div>
<div class="btn" style="left:441.4px;width:39px;background:#d0d0d0;border-color:#cdcdcd;"></div>
<div class="t" style="left:452.15px;top:323px;font-size:7.3px;color:#a3a3a3;transform:scaleX(0.958);transform-origin:0 0;">Apply</div>
<div class="a" style="left:394px;top:185.500px;width:17px;height:17px;border-radius:50%;background:radial-gradient(circle,rgba(246,240,70,.97) 0%,rgba(244,238,80,.9) 50%,rgba(240,236,110,.45) 80%,rgba(240,236,120,0) 100%)"></div>
<svg class="a" style="left:402.3px;top:193.5px" width="8" height="12" viewBox="0 0 8 12"><path d="M0.6 0.6V9.2L2.6 7.3L4 10.6L5.3 10L3.9 6.8H6.6Z" fill="#fff" stroke="#111" stroke-width="0.7" stroke-linejoin="round"/></svg>

</body>
</html>
